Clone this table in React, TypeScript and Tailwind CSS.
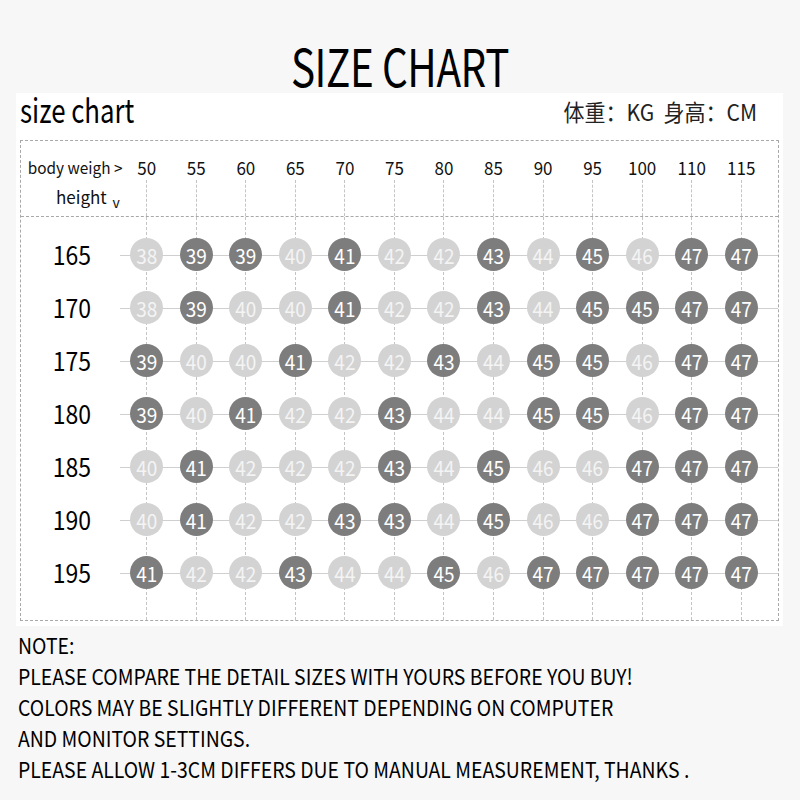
import React from "react";

const weights = ["50", "55", "60", "65", "70", "75", "80", "85", "90", "95", "100", "110", "115"];

type Cell = [number, boolean];
const D = true;
const L = false;

const rows: { h: string; cells: Cell[] }[] = [
  { h: "165", cells: [[38, L], [39, D], [39, D], [40, L], [41, D], [42, L], [42, L], [43, D], [44, L], [45, D], [46, L], [47, D], [47, D]] },
  { h: "170", cells: [[38, L], [39, D], [40, L], [40, L], [41, D], [42, L], [42, L], [43, D], [44, L], [45, D], [45, D], [47, D], [47, D]] },
  { h: "175", cells: [[39, D], [40, L], [40, L], [41, D], [42, L], [42, L], [43, D], [44, L], [45, D], [45, D], [46, L], [47, D], [47, D]] },
  { h: "180", cells: [[39, D], [40, L], [41, D], [42, L], [42, L], [43, D], [44, L], [44, L], [45, D], [45, D], [46, L], [47, D], [47, D]] },
  { h: "185", cells: [[40, L], [41, D], [42, L], [42, L], [42, L], [43, D], [44, L], [45, D], [46, L], [46, L], [47, D], [47, D], [47, D]] },
  { h: "190", cells: [[40, L], [41, D], [42, L], [42, L], [43, D], [43, D], [44, L], [45, D], [46, L], [46, L], [47, D], [47, D], [47, D]] },
  { h: "195", cells: [[41, D], [42, L], [42, L], [43, D], [44, L], [44, L], [45, D], [46, L], [47, D], [47, D], [47, D], [47, D], [47, D]] },
];

const font = { fontFamily: '"Noto Sans CJK SC", "Noto Sans", sans-serif' };

export default function App() {
  return (
    <div className="w-[800px] h-[800px] bg-[#f7f7f7] text-[#111] overflow-hidden" style={font}>
      <div className="h-[93px] flex items-center justify-center pt-[36px]">
        <h1 className="text-[46px] leading-none font-normal text-black tracking-[-0.5px] scale-x-[0.88] scale-y-[1.12]">SIZE CHART</h1>
      </div>

      <div className="mx-[16px] w-[767px] bg-white pb-[5px]">
        <div className="h-[47px] flex items-center justify-between pl-[4px] pr-[26px]">
          <span className="relative -top-[8px] text-[30px] leading-none text-black origin-left scale-x-[0.86] scale-y-[1.1]">size chart</span>
          <span className="relative -top-[5px] text-[21px] leading-none text-[#222] scale-y-[1.08]">体重：KG&nbsp;&nbsp;身高：CM</span>
        </div>

        <div className="mx-[4px] border border-dashed border-[#a8a8a8]">
          {/* header */}
          <div className="h-[76px] grid grid-cols-[101px_repeat(13,1fr)_12px] border-b border-dashed border-[#a8a8a8]">
            <div className="flex flex-col pt-[15px]">
              <span className="pl-[7px] text-[16px] leading-[22px] whitespace-nowrap origin-left scale-x-[0.96]">body weigh &gt;</span>
              <span className="pl-[35px] mt-[8px] text-[17px] leading-[22px] whitespace-nowrap">
                height <span className="text-[14px] relative top-[4px] ml-[2px]">v</span>
              </span>
            </div>
            {weights.map((w) => (
              <div key={w} className="flex flex-col items-center pt-[16px]">
                <span className="text-[17px] leading-[20px] scale-y-[1.08]">{w}</span>
                <div className="flex-1 mt-[3px] border-l border-dashed border-[#c4c4c4]" />
              </div>
            ))}
            <div />
          </div>

          {/* body */}
          <div className="relative pt-[11px] pb-[21px]">
            <div className="absolute inset-0 grid grid-cols-[101px_repeat(13,1fr)_12px]">
              <div />
              {weights.map((w) => (
                <div key={w} className="flex justify-center">
                  <div className="h-full border-l border-dashed border-[#c4c4c4]" />
                </div>
              ))}
              <div />
            </div>
            {rows.map((r) => (
              <div key={r.h} className="relative h-[53px] grid grid-cols-[101px_repeat(13,1fr)_12px] items-center">
                <div className="absolute left-[99px] right-0 top-1/2 h-px bg-[#cfcfcf]" />
                <span className="relative text-center text-[23px] leading-none text-black pl-[1px] scale-y-[1.12]">{r.h}</span>
                {r.cells.map(([n, dark], i) => (
                  <div key={i} className="relative flex justify-center">
                    <div
                      className={
                        "w-[33px] h-[33px] rounded-full flex items-center justify-center text-[19px] leading-none " +
                        (dark ? "bg-[#7d7d7d] text-white" : "bg-[#d3d3d3] text-[#f4f4f4]")
                      }
                    >
                      <span className="scale-y-[1.1]">{n}</span>
                    </div>
                  </div>
                ))}
                <div />
              </div>
            ))}
          </div>
        </div>
      </div>

      <div className="pl-[18px] pt-[4px] text-[21px] leading-[31px] text-black">
        <p className="origin-left scale-x-[0.925] scale-y-[1.05] whitespace-nowrap">NOTE:</p>
        <p className="origin-left scale-x-[0.925] scale-y-[1.05] whitespace-nowrap">PLEASE COMPARE THE DETAIL SIZES WITH YOURS BEFORE YOU BUY!</p>
        <p className="origin-left scale-x-[0.925] scale-y-[1.05] whitespace-nowrap">COLORS MAY BE SLIGHTLY DIFFERENT DEPENDING ON COMPUTER</p>
        <p className="origin-left scale-x-[0.925] scale-y-[1.05] whitespace-nowrap">AND MONITOR SETTINGS.</p>
        <p className="origin-left scale-x-[0.925] scale-y-[1.05] whitespace-nowrap">PLEASE ALLOW 1-3CM DIFFERS DUE TO MANUAL MEASUREMENT, THANKS .</p>
      </div>
    </div>
  );
}
